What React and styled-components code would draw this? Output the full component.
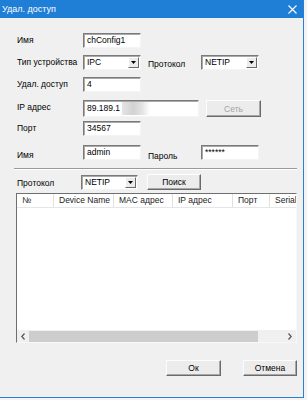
import React from "react";
import styled, { createGlobalStyle } from "styled-components";

const Global = createGlobalStyle`
  html, body { margin: 0; padding: 0; background: #f3f3f3; }
  body { font-family: "Liberation Sans", Arial, sans-serif; font-size: 8.5px; color: #000; }
  * { box-sizing: border-box; }
`;

const Window = styled.div`
  width: 304px;
  height: 398px;
  background: #f0f0f0;
  border-right: 1px solid #2b7fd0;
  border-bottom: 1px solid #2b7fd0;
  display: flex;
  flex-direction: column;
`;

const TitleBar = styled.div`
  height: 18px;
  background: #1f7ed6;
  color: #fff;
  display: flex;
  align-items: center;
  justify-content: space-between;
  padding: 0 6px 0 2px;
  font-size: 9px;
`;

const Body = styled.div`
  flex: 1;
  display: flex;
  flex-direction: column;
  padding: 15px 6px 0 14px;
`;

const Row = styled.div`
  display: flex;
  align-items: flex-start;
  height: ${(p) => p.$h || 15}px;
  margin-top: ${(p) => p.$mt || 0}px;
  padding-left: ${(p) => (p.$pl === undefined ? 3 : p.$pl)}px;
`;

const Label = styled.div`
  width: ${(p) => p.$w || 66}px;
  flex: none;
  line-height: 15px;
  padding-top: ${(p) => p.$dy || 0}px;
  white-space: nowrap;
  margin-left: ${(p) => p.$ml || 0}px;
`;

const Field = styled.div`
  width: ${(p) => p.$w || 58}px;
  height: ${(p) => p.$h || 15}px;
  flex: none;
  background: #fff;
  border-style: solid;
  border-width: 1px;
  border-color: #7a7a7a #f4f4f4 #f4f4f4 #7a7a7a;
  box-shadow: inset 1px 1px 0 #a9a9a9;
  padding: 0 3px;
  line-height: 13px;
  display: flex;
  align-items: center;
  white-space: nowrap;
  overflow: hidden;
  position: relative;
`;

const Blur = styled.span`
  position: absolute;
  left: 38px;
  top: 1px;
  width: 28px;
  height: 13px;
  background: linear-gradient(90deg, #e4e4e4 0%, #d2d2d2 40%, #e2e2e2 70%, #fff 100%);
`;

const SelectBox = styled(Field)`
  padding-right: 0;
  justify-content: space-between;
`;

const DropBtn = styled.div`
  width: 11px;
  height: 11px;
  margin-right: 1px;
  background: #ececec;
  border-style: solid;
  border-width: 1px;
  border-color: #fff #6a6a6a #6a6a6a #fff;
  display: flex;
  align-items: center;
  justify-content: center;
`;

const Button = styled.div`
  width: ${(p) => p.$w || 55}px;
  height: ${(p) => p.$h || 16}px;
  margin-left: ${(p) => p.$ml || 0}px;
  margin-top: ${(p) => p.$mt || 0}px;
  flex: none;
  background: #ececec;
  border-style: solid;
  border-width: 1px;
  border-color: #fdfdfd #6a6a6a #6a6a6a #fdfdfd;
  box-shadow: inset -1px -1px 0 #a8a8a8;
  display: flex;
  align-items: center;
  justify-content: center;
  color: ${(p) => (p.$disabled ? "#a4a4a4" : "#000")};
`;

const Separator = styled.div`
  height: 2px;
  margin-top: 8px;
  border-top: 1px solid #9a9a9a;
  border-bottom: 1px solid #fff;
`;

const Table = styled.div`
  margin: 3px 0 0 2px;
  height: 150px;
  background: #fff;
  border-style: solid;
  border-width: 1px;
  border-color: #6f6f6f #f8f8f8 #f8f8f8 #6f6f6f;
  display: flex;
  flex-direction: column;
  overflow: hidden;
`;

const Header = styled.div`
  display: flex;
  height: 14px;
  border-bottom: 1px solid #e6e6e6;
  flex: none;
`;

const HeadCell = styled.div`
  width: ${(p) => p.$w}px;
  flex: none;
  padding-left: 5px;
  line-height: 13px;
  border-right: 1px solid #e0e0e0;
  white-space: nowrap;
  overflow: hidden;
  color: #222;
`;

const TableArea = styled.div`
  flex: 1;
`;

const HScroll = styled.div`
  height: 12px;
  background: #f0f0f0;
  display: flex;
  align-items: center;
  flex: none;
`;

const ScrollArrow = styled.div`
  width: 12px;
  height: 12px;
  display: flex;
  align-items: center;
  justify-content: center;
  flex: none;
`;

const ScrollTrack = styled.div`
  flex: 1;
  height: 12px;
  display: flex;
  align-items: center;
`;

const Thumb = styled.div`
  width: 229px;
  height: 11px;
  background: #cdcdcd;
`;

const Footer = styled.div`
  display: flex;
  justify-content: flex-end;
  margin-top: 17px;
  padding-right: 0;
  gap: 22px;
`;

const Close = () => (
  <svg width="9" height="9" viewBox="0 0 9 9">
    <path d="M0.5 0.5 L8.5 8.5 M8.5 0.5 L0.5 8.5" stroke="#fff" strokeWidth="1.1" />
  </svg>
);

const Tri = () => (
  <svg width="5" height="3" viewBox="0 0 5 3">
    <path d="M0 0 H5 L2.5 3 Z" fill="#000" />
  </svg>
);

const Chevron = ({ dir }) => (
  <svg width="4" height="7" viewBox="0 0 4 7">
    <path
      d={dir === "left" ? "M3.5 0.5 L0.8 3.5 L3.5 6.5" : "M0.5 0.5 L3.2 3.5 L0.5 6.5"}
      stroke="#555"
      strokeWidth="1.2"
      fill="none"
    />
  </svg>
);

const Select = ({ value, w }) => (
  <SelectBox $w={w}>
    <span>{value}</span>
    <DropBtn>
      <Tri />
    </DropBtn>
  </SelectBox>
);

const columns = [
  ["№", 37],
  ["Device Name", 60],
  ["MAC адрес", 59],
  ["IP адрес", 60],
  ["Порт", 37],
  ["Serial", 40],
];

export default function App() {
  return (
    <>
      <Global />
      <Window>
        <TitleBar>
          <span>Удал. доступ</span>
          <Close />
        </TitleBar>
        <Body>
          <Row>
            <Label>Имя</Label>
            <Field>chConfig1</Field>
          </Row>
          <Row $mt={7}>
            <Label>Тип устройства</Label>
            <Select value="IPC" />
            <Label $w={53} $ml={7} $dy={2}>Протокол</Label>
            <Select value="NETIP" />
          </Row>
          <Row $mt={7}>
            <Label>Удал. доступ</Label>
            <Field>4</Field>
          </Row>
          <Row $mt={8} $h={17}>
            <Label $dy={-2}>IP адрес</Label>
            <Field $w={116} $h={17}>
              89.189.1
              <Blur />
            </Field>
            <Button $ml={7} $h={17} $disabled>Сеть</Button>
          </Row>
          <Row $mt={4}>
            <Label>Порт</Label>
            <Field>34567</Field>
          </Row>
          <Row $mt={9}>
            <Label $dy={3}>Имя</Label>
            <Field>admin</Field>
            <Label $w={53} $ml={7} $dy={4}>Пароль</Label>
            <Field>******</Field>
          </Row>
          <Separator />
          <Row $mt={5} $h={15}>
            <Label $w={64} $dy={1}>Протокол</Label>
            <Select value="NETIP" w={57} />
            <Button $ml={9} $w={54} $mt={-1}>Поиск</Button>
          </Row>
          <Table>
            <Header>
              {columns.map(([t, w]) => (
                <HeadCell key={t} $w={w}>{t}</HeadCell>
              ))}
            </Header>
            <TableArea />
            <HScroll>
              <ScrollArrow><Chevron dir="left" /></ScrollArrow>
              <ScrollTrack><Thumb /></ScrollTrack>
              <ScrollArrow><Chevron dir="right" /></ScrollArrow>
            </HScroll>
          </Table>
          <Footer>
            <Button $w={55}>Ок</Button>
            <Button $w={54}>Отмена</Button>
          </Footer>
        </Body>
      </Window>
    </>
  );
}
